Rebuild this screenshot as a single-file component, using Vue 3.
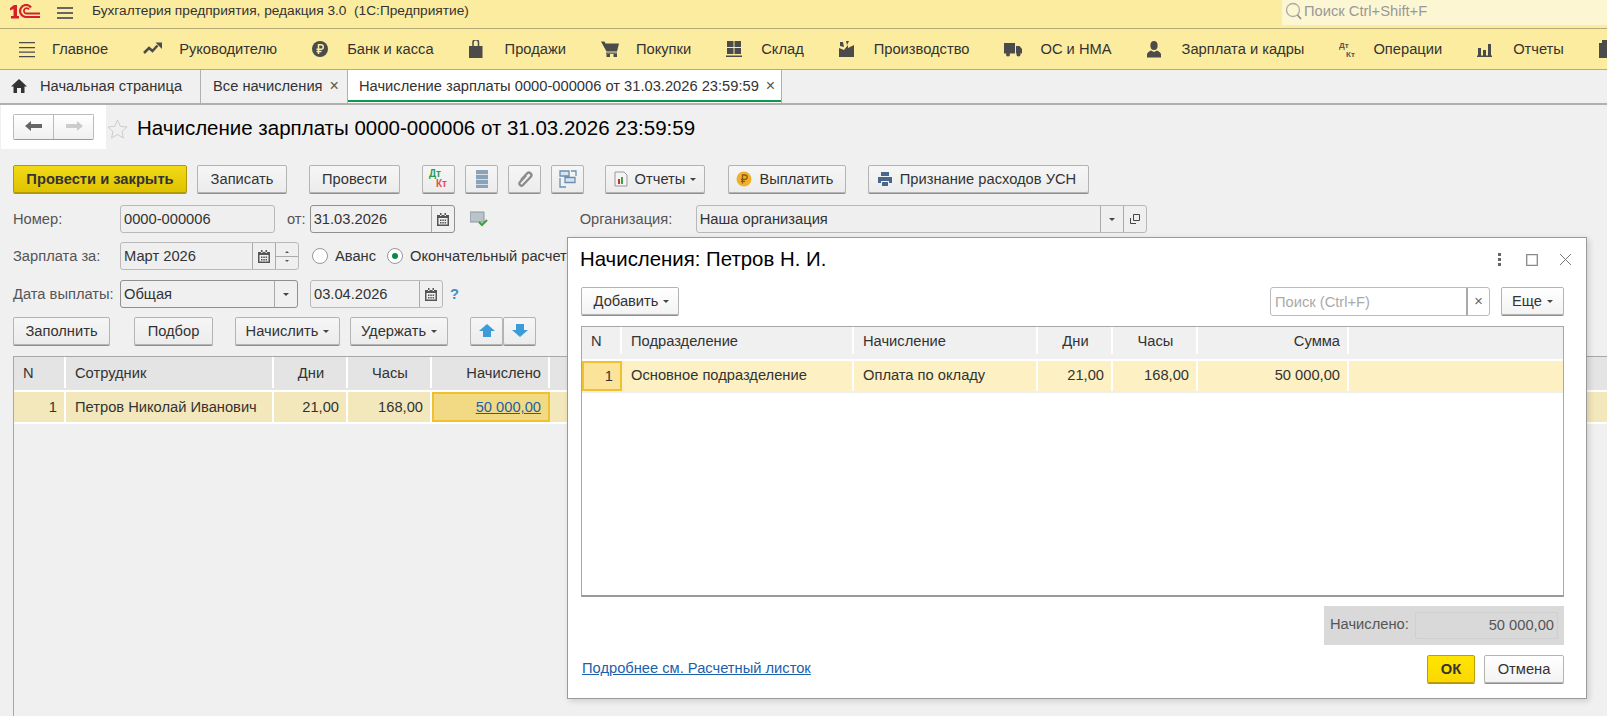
<script setup>
const sections = [
  { label: 'Главное', w: 33, icon: 'main' },
  { label: 'Руководителю', w: 36, icon: 'trend' },
  { label: 'Банк и касса', w: 35, icon: 'bank' },
  { label: 'Продажи', w: 36, icon: 'bag' },
  { label: 'Покупки', w: 35, icon: 'cart' },
  { label: 'Склад', w: 35, icon: 'stock' },
  { label: 'Производство', w: 35, icon: 'factory' },
  { label: 'ОС и НМА', w: 36, icon: 'truck' },
  { label: 'Зарплата и кадры', w: 35, icon: 'person' },
  { label: 'Операции', w: 34, icon: 'dtkt' },
  { label: 'Отчеты', w: 36, icon: 'bars' },
  { label: '', w: 20, icon: 'case' },
]

const mainColumns = [
  { title: 'N', value: '1', width: 52, cls: 'num' },
  { title: 'Сотрудник', value: 'Петров Николай Иванович', width: 208, cls: 'left' },
  { title: 'Дни', value: '21,00', width: 74, cls: 'right center-head' },
  { title: 'Часы', value: '168,00', width: 84, cls: 'right center-head' },
  { title: 'Начислено', value: '50 000,00', width: 118, cls: 'right current' },
  { title: '', value: '', width: 0, cls: 'fill' },
]

const dialogColumns = [
  { title: 'N', value: '1', width: 40, cls: 'num current' },
  { title: 'Подразделение', value: 'Основное подразделение', width: 232, cls: 'left' },
  { title: 'Начисление', value: 'Оплата по окладу', width: 184, cls: 'left' },
  { title: 'Дни', value: '21,00', width: 75, cls: 'right center-head' },
  { title: 'Часы', value: '168,00', width: 85, cls: 'right center-head' },
  { title: 'Сумма', value: '50 000,00', width: 151, cls: 'right' },
  { title: '', value: '', width: 0, cls: 'fill' },
]
</script>

<template>
  <div class="page">
    <header class="topbar">
      <svg class="logo" width="30" height="15" viewBox="0 0 30 15">
        <path d="M0 4l4-3h3v11h2v2.500H1V12h2.500V5L0 6.500z" fill="#d4202a" />
        <path d="M21 3.500A6 6 0 1 0 16 13H30" fill="none" stroke="#d4202a" stroke-width="2.200" />
        <path d="M19 5.500A2.700 2.700 0 1 0 16.500 9.500H30" fill="none" stroke="#d4202a" stroke-width="1.800" />
      </svg>
      <span class="burger"><i></i><i></i><i></i></span>
      <span class="app-title">Бухгалтерия предприятия, редакция 3.0&nbsp; (1С:Предприятие)</span>
      <div class="global-search">
        <svg width="18" height="20" viewBox="0 0 18 20">
          <circle cx="8" cy="9" r="6.500" fill="none" stroke="#aaa" stroke-width="1.300" />
          <path d="M12.500 14l3.500 4" stroke="#888" stroke-width="1.500" />
        </svg>
        <span>Поиск Ctrl+Shift+F</span>
      </div>
    </header>

    <nav class="sections">
      <div v-for="s in sections" :key="s.icon" class="section">
        <span class="section-icon" :style="{ width: s.w + 'px' }">
          <svg width="20" height="20" viewBox="0 0 20 20" fill="#4b4b4b">
            <template v-if="s.icon === 'main'">
              <path d="M0 2h16v1.200H0zM0 7h16v1.200H0zM0 11.600h16v1.200H0zM0 16h16v1.200H0z" />
            </template>
            <template v-else-if="s.icon === 'trend'">
              <path d="M1 13l5-5 3.500 3 5-5.500" fill="none" stroke="#4b4b4b" stroke-width="2.500" />
              <path d="M12.500 2.500h6.500V9z" />
            </template>
            <template v-else-if="s.icon === 'bank'">
              <circle cx="8" cy="9" r="8" />
              <path d="M6.500 14V4.700h2.500a2.300 2.300 0 0 1 0 4.600H4.500M4.500 11.600h5" fill="none" stroke="#fcec9f" stroke-width="1.500" />
            </template>
            <template v-else-if="s.icon === 'bag'">
              <path d="M0 6h13.500v12H0z" />
              <path d="M4 7V2.500a2.700 2.700 0 0 1 5.500 0V7" fill="none" stroke="#4b4b4b" stroke-width="1.500" />
            </template>
            <template v-else-if="s.icon === 'cart'">
              <path d="M0 1.500h3.500l1 2H18l-2 8H5.500zM5 12.500h11v1.300H5z" />
              <path d="M5.500 14h3.500v3H5.500zM12.500 14h3.500v3h-3.500z" />
            </template>
            <template v-else-if="s.icon === 'stock'">
              <path d="M1 1h6.500v6H1zM8.500 1H15v6H8.500zM1 8h6.500v6H1zM8.500 8H15v6H8.500zM0 15.500h16V17H0z" />
            </template>
            <template v-else-if="s.icon === 'factory'">
              <path d="M0 17V8l5 2 4-5v3l6-3v12zM1 2h3l1 5-4-1zM7 1h3L8 5z" />
            </template>
            <template v-else-if="s.icon === 'truck'">
              <path d="M0 3h11v10.500H0zM12 6h3.500l2.500 3v4.500h-6z" />
              <circle cx="4" cy="14.500" r="2" />
              <circle cx="14.500" cy="14.500" r="2" />
            </template>
            <template v-else-if="s.icon === 'person'">
              <ellipse cx="7" cy="5.500" rx="3.600" ry="4.500" />
              <path d="M0 17.500v-3c0-2 2-3 4-4l3 1.500 3-1.500c2 1 4 2 4 4v3z" />
            </template>
            <template v-else-if="s.icon === 'dtkt'">
              <text x="0" y="8" class="micro">Дт</text>
              <text x="7" y="17" class="micro">Кт</text>
            </template>
            <template v-else-if="s.icon === 'bars'">
              <path d="M1 8h3v8H1zM6 10h3v6H6zM11 4h3v12h-3zM0 15.500h15V17H0z" />
            </template>
            <template v-else>
              <path d="M3 0h8v3h3v15H0V3h3z" />
            </template>
          </svg>
        </span>
        <span v-if="s.label">{{ s.label }}</span>
      </div>
    </nav>

    <div class="tabs">
      <div class="tab home">
        <svg width="16" height="14" viewBox="0 0 16 14" fill="#333"><path d="M8 0l8 7.500h-2.500V14H10V9H6v5H2.500V7.500H0z" /></svg>
        <span>Начальная страница</span>
      </div>
      <div class="tab list"><span>Все начисления</span><b>×</b></div>
      <div class="tab active"><span>Начисление зарплаты 0000-000006 от 31.03.2026 23:59:59</span><b>×</b></div>
    </div>

    <main class="doc">
      <div class="doc-title">
        <div class="history">
          <div class="history-btns">
            <button class="hist">
              <svg width="18" height="12" viewBox="0 0 18 12" fill="#666"><path d="M0 6l6-5v3h11v4H6v3z" /></svg>
            </button>
            <button class="hist">
              <svg width="18" height="12" viewBox="0 0 18 12" fill="#ccc"><path d="M18 6l-6-5v3H1v4h11v3z" /></svg>
            </button>
          </div>
        </div>
        <svg class="star" width="21" height="20" viewBox="0 0 21 20"><path d="M10.500 1l2.900 6.300 6.600.7-5 4.500 1.400 6.500-5.900-3.400L4.600 19 6 12.500 1 8l6.600-.7z" fill="none" stroke="#ccc" /></svg>
        <h1>Начисление зарплаты 0000-000006 от 31.03.2026 23:59:59</h1>
      </div>

      <div class="toolbar main-actions">
        <button class="btn primary w-174">Провести и закрыть</button>
        <button class="btn w-90 ml-10">Записать</button>
        <button class="btn w-91 ml-22">Провести</button>
        <button class="btn icon-btn ml-22">
          <svg width="24" height="22" viewBox="0 0 24 22">
            <text x="2" y="9" class="dt">Дт</text>
            <text x="9" y="19" class="kt">Кт</text>
          </svg>
        </button>
        <button class="btn icon-btn ml-10">
          <svg width="14" height="20" viewBox="0 0 14 20" fill="#8aa3b8">
            <path d="M1 1h12v4.300H1zM1 6h12v4.300H1zM1 11h12v4.300H1zM1 16h12v3H1z" />
          </svg>
        </button>
        <button class="btn icon-btn ml-10">
          <svg width="18" height="18" viewBox="0 0 18 18">
            <path d="M5 10l6-6.500a2.500 2.500 0 0 1 3.600 3.500L7 15a2 2 0 0 1-3-3l6-6.500" fill="none" stroke="#8c8c8c" stroke-width="2.400" />
          </svg>
        </button>
        <button class="btn icon-btn ml-10">
          <svg width="18" height="18" viewBox="0 0 18 18" fill="#d6e4f0" stroke="#6d8db0" stroke-width="1.300">
            <path d="M1 1h9v5H1zM6 7.500h10v5H6z" />
            <path d="M1 8v9h6M12 1h5v5" fill="none" />
          </svg>
        </button>
        <button class="btn ml-21 w-100">
          <svg class="lead" width="14" height="16" viewBox="0 0 14 16">
            <path d="M1 1h9l3 3v11H1z" fill="#f4f4f4" stroke="#999" />
            <path d="M4 8h2v5H4z" fill="#c0392b" />
            <path d="M7 6h2v7H7z" fill="#4a9a4a" />
          </svg>
          Отчеты <i class="caret"></i>
        </button>
        <button class="btn ml-23 w-118 nudge">
          <svg class="lead" width="16" height="16" viewBox="0 0 16 16">
            <circle cx="8" cy="8" r="7.500" fill="#efb02e" />
            <path d="M6.500 12.500V4h2.500a2 2 0 0 1 0 4.300H5M5 10.300h4" fill="none" stroke="#8a5a10" stroke-width="1.300" />
          </svg>
          Выплатить
        </button>
        <button class="btn ml-22 w-221 nudge">
          <svg class="lead" width="16" height="16" viewBox="0 0 16 16" fill="#47688c">
            <path d="M4 1h8v4H4zM1 6h14v6h-3v-2H4v2H1zM5 11h6v4H5z" />
          </svg>
          Признание расходов УСН
        </button>
      </div>

      <div class="field-row row-number">
        <label class="field-label">Номер:</label>
        <div class="input readonly w-155"><span>0000-000006</span></div>
        <label class="field-label ml-12">от:</label>
        <div class="input strong w-145 ml-4">
          <span>31.03.2026</span>
          <span class="addon"><svg width="12" height="13" viewBox="0 0 12 13" fill="#555"><path d="M0 2h12v11H0zM1.500 5v6.500h9V5zM3 0h1.500v3H3zM7.500 0H9v3H7.500zM3 6.500h1.500V8H3zM5.300 6.500h1.500V8H5.300zM7.600 6.500h1.500V8H7.600zM3 9h1.500v1.500H3zM5.300 9h1.500v1.500H5.300zM7.600 9h1.500v1.500H7.600z" fill-rule="evenodd" /></svg></span>
        </div>
        <svg class="ml-15" width="18" height="16" viewBox="0 0 18 16">
          <path d="M0 1h14v10H0z" fill="#b9c3c9" stroke="#8b979e" />
          <path d="M9 11l3 3 5-5" fill="none" stroke="#3ca03c" stroke-width="2" />
        </svg>
        <label class="field-label org-label">Организация:</label>
        <div class="input readonly org">
          <span>Наша организация</span>
          <span class="addon wide"><i class="caret"></i></span>
          <span class="addon wide"><svg width="10" height="10" viewBox="0 0 10 10" fill="none" stroke="#444"><path d="M3.500.5h6v6h-6zM.5 4v5.500H6" /></svg></span>
        </div>
      </div>

      <div class="field-row row-period">
        <label class="field-label">Зарплата за:</label>
        <div class="input readonly w-179">
          <span>Март 2026</span>
          <span class="addon"><svg width="12" height="13" viewBox="0 0 12 13" fill="#555"><path d="M0 2h12v11H0zM1.500 5v6.500h9V5zM3 0h1.500v3H3zM7.500 0H9v3H7.500zM3 6.500h1.500V8H3zM5.300 6.500h1.500V8H5.300zM7.600 6.500h1.500V8H7.600zM3 9h1.500v1.500H3zM5.300 9h1.500v1.500H5.300zM7.600 9h1.500v1.500H7.600z" fill-rule="evenodd" /></svg></span>
          <span class="addon spin"><i class="mini up"></i><i class="mini"></i></span>
        </div>
        <span class="radio ml-13"></span><span class="radio-label">Аванс</span>
        <span class="radio on ml-11"></span><span class="radio-label">Окончательный расчет</span>
      </div>

      <div class="field-row row-pay">
        <label class="field-label">Дата выплаты:</label>
        <div class="input strong w-178">
          <span>Общая</span>
          <span class="addon"><i class="caret"></i></span>
        </div>
        <div class="input w-133 ml-12">
          <span>03.04.2026</span>
          <span class="addon"><svg width="12" height="13" viewBox="0 0 12 13" fill="#555"><path d="M0 2h12v11H0zM1.500 5v6.500h9V5zM3 0h1.500v3H3zM7.500 0H9v3H7.500zM3 6.500h1.500V8H3zM5.300 6.500h1.500V8H5.300zM7.600 6.500h1.500V8H7.600zM3 9h1.500v1.500H3zM5.300 9h1.500v1.500H5.300zM7.600 9h1.500v1.500H7.600z" fill-rule="evenodd" /></svg></span>
        </div>
        <span class="hint">?</span>
      </div>

      <div class="toolbar table-actions">
        <button class="btn w-97">Заполнить</button>
        <button class="btn w-79 ml-24">Подбор</button>
        <button class="btn w-105 ml-22">Начислить <i class="caret"></i></button>
        <button class="btn w-98 ml-10">Удержать <i class="caret"></i></button>
        <div class="btn-group ml-22">
          <button class="btn icon-btn">
            <svg width="16" height="14" viewBox="0 0 16 14" fill="#3d9bd8"><path d="M8 0l8 7h-4v6H4V7H0z" /></svg>
          </button>
          <button class="btn icon-btn">
            <svg width="16" height="14" viewBox="0 0 16 14" fill="#3d9bd8"><path d="M4 0h8v6h4l-8 7-8-7h4z" /></svg>
          </button>
        </div>
      </div>

      <div class="grid main-grid">
        <div class="grid-head">
          <div v-for="c in mainColumns" :key="c.title" class="cell" :class="c.cls" :style="c.width ? { width: c.width + 'px' } : null">{{ c.title }}</div>
        </div>
        <div class="grid-row">
          <div v-for="c in mainColumns" :key="c.title" class="cell" :class="c.cls" :style="c.width ? { width: c.width + 'px' } : null">
            <a v-if="c.title === 'Начислено'" class="link">{{ c.value }}</a>
            <template v-else>{{ c.value }}</template>
          </div>
        </div>
      </div>
    </main>

    <section class="dialog">
      <div class="dialog-head">
        <h2>Начисления: Петров Н. И.</h2>
        <div class="win-controls">
          <svg class="dots" width="3" height="13" viewBox="0 0 3 13" fill="#666"><path d="M0 0h3v3H0zM0 5h3v3H0zM0 10h3v3H0z" /></svg>
          <svg width="12" height="12" viewBox="0 0 12 12" fill="none" stroke="#888" stroke-width="1.300"><path d="M.7.7h10.600v10.600H.7z" /></svg>
          <svg width="11" height="11" viewBox="0 0 11 11" fill="none" stroke="#777"><path d="M0 0l11 11M11 0L0 11" /></svg>
        </div>
      </div>

      <div class="dialog-tools">
        <button class="btn flat w-98 add">Добавить <i class="caret"></i></button>
        <div class="search-box">
          <span>Поиск (Ctrl+F)</span>
          <b>×</b>
        </div>
        <button class="btn flat w-63">Еще <i class="caret"></i></button>
      </div>

      <div class="grid dialog-grid">
        <div class="grid-head">
          <div v-for="c in dialogColumns" :key="c.title" class="cell" :class="c.cls" :style="c.width ? { width: c.width + 'px' } : null">{{ c.title }}</div>
        </div>
        <div class="grid-row">
          <div v-for="c in dialogColumns" :key="c.title" class="cell" :class="c.cls" :style="c.width ? { width: c.width + 'px' } : null">{{ c.value }}</div>
        </div>
      </div>

      <div class="total-wrap">
        <div class="total">
          <span>Начислено:</span>
          <div class="total-value">50 000,00</div>
        </div>
      </div>

      <div class="dialog-foot">
        <a class="details">Подробнее см. Расчетный листок</a>
        <button class="btn ok">ОК</button>
        <button class="btn flat cancel">Отмена</button>
      </div>
    </section>
  </div>
</template>

<style>
html,
body {
  margin: 0;
  overflow: hidden;
  background: #f0f0f0;
}
</style>

<style scoped>
.page {
  position: relative;
  width: 1607px;
  height: 716px;
  overflow: hidden;
  background: #f0f0f0;
  color: #333;
  font: 14.7px "Liberation Sans", Arial, sans-serif;
}

.topbar {
  display: flex;
  align-items: flex-start;
  height: 28px;
  border-bottom: 1px solid #b5ab74;
  background: #fcec9f;
}
.logo {
  flex: none;
  margin: 4px 0 0 10px;
}
.burger {
  display: flex;
  flex-direction: column;
  gap: 3.500px;
  width: 16px;
  margin: 7px 0 0 17px;
}
.burger i {
  height: 1.500px;
  background: #666;
}
.app-title {
  margin: 3px 0 0 19px;
  font-size: 13.700px;
  line-height: 16px;
}
.global-search {
  display: flex;
  align-items: center;
  gap: 1px;
  width: 325px;
  height: 25px;
  margin-left: auto;
  padding: 0 0 3px 3px;
  background: #fdf6d2;
  color: #999;
  box-sizing: border-box;
}

.sections {
  display: flex;
  align-items: center;
  gap: 35px;
  height: 40px;
  padding-left: 19px;
  border-bottom: 1px solid #b5ab74;
  background: #fcec9f;
  white-space: nowrap;
}
.section {
  display: flex;
  align-items: center;
  flex: none;
}
.section-icon {
  display: block;
  height: 20px;
  margin-top: 1px;
}
.micro {
  font: bold 8px "Liberation Sans", sans-serif;
  fill: #555;
}

.tabs {
  display: flex;
  height: 33px;
  border-bottom: 2px solid #b0b0b0;
}
.tab {
  display: flex;
  align-items: center;
  height: 33px;
  padding-bottom: 2px;
  box-sizing: border-box;
  border-right: 1px solid #b0b0b0;
  white-space: nowrap;
}
.tab.home {
  width: 201px;
  padding-left: 11px;
  gap: 13px;
}
.tab.list {
  width: 147px;
  padding-left: 12px;
}
.tab.active {
  width: 434px;
  padding-left: 11px;
  background: #fff;
  box-shadow: inset 0 -1px 0 #fff, inset 0 -3px 0 #0a9a4b;
}
.tab b {
  margin-left: 7px;
  font-weight: 400;
  font-size: 16px;
  color: #555;
}

.doc {
  padding-left: 13px;
}
.doc-title {
  display: flex;
  align-items: center;
  height: 44px;
  margin-left: -12px;
}
.history {
  display: flex;
  flex: none;
  align-items: center;
  box-sizing: border-box;
  width: 105px;
  height: 44px;
  padding-left: 12px;
  background: #fff;
}
.history-btns {
  display: flex;
  width: 81px;
  height: 26px;
  border: 1px solid #bbb;
  border-bottom-color: #999;
  border-radius: 2px;
  box-sizing: border-box;
}
.hist {
  flex: 1;
  padding: 0;
  border: 0;
  background: linear-gradient(#fff, #f0f0f0);
}
.hist + .hist {
  border-left: 1px solid #bbb;
}
.star {
  margin: 0 0 0 1px;
  flex: none;
  transform: translateY(2px);
}
h1 {
  margin: 2px 0 0 9px;
  font-size: 20.500px;
  font-weight: 400;
  color: #000;
  white-space: nowrap;
}

.toolbar {
  display: flex;
  height: 29px;
}
.main-actions {
  margin-top: 16px;
}
.table-actions {
  margin-top: 9px;
}

.btn {
  display: inline-flex;
  align-items: center;
  justify-content: center;
  flex: none;
  height: 28px;
  padding: 0;
  border: 1px solid #b4b4b4;
  border-radius: 2px;
  box-shadow: 0 1px 0 #8f8f8f;
  background: linear-gradient(#f6f6f6, #ececec);
  color: #333;
  font: inherit;
}
.btn.primary {
  border-color: #b39a00;
  background: linear-gradient(#f2da17, #dfc200);
  font-weight: 700;
}
.btn.flat {
  background: linear-gradient(#fff, #f3f3f3);
}
.btn.nudge {
  padding-right: 4px;
}
.btn.add {
  padding-left: 3px;
}
.icon-btn {
  width: 33px;
}
.btn-group {
  display: flex;
}
.lead {
  margin-right: 7px;
}
.caret {
  display: inline-block;
  width: 0;
  height: 0;
  margin-left: 5px;
  border: 3px solid transparent;
  border-top: 3px solid #444;
  border-bottom: 0;
}

.w-63 { width: 63px; }
.w-79 { width: 79px; }
.w-90 { width: 90px; }
.w-91 { width: 91px; }
.w-97 { width: 97px; }
.w-98 { width: 98px; }
.w-100 { width: 100px; }
.w-105 { width: 105px; }
.w-118 { width: 118px; }
.w-133 { width: 133px; }
.w-145 { width: 145px; }
.w-155 { width: 155px; }
.w-174 { width: 174px; }
.w-178 { width: 178px; }
.w-179 { width: 179px; }
.w-221 { width: 221px; }
.ml-4 { margin-left: 4px; }
.ml-10 { margin-left: 10px; }
.ml-11 { margin-left: 11px; }
.ml-12 { margin-left: 12px; }
.ml-13 { margin-left: 13px; }
.ml-15 { margin-left: 15px; }
.ml-21 { margin-left: 21px; }
.ml-22 { margin-left: 22px; }
.ml-23 { margin-left: 23px; }
.ml-24 { margin-left: 24px; }

.dt {
  font: bold 10px "Liberation Sans", sans-serif;
  fill: #2d9a4f;
}
.kt {
  font: bold 10px "Liberation Sans", sans-serif;
  fill: #e05050;
}

.field-row {
  display: flex;
  align-items: center;
  height: 28px;
}
.row-number {
  margin-top: 11px;
}
.row-period {
  margin-top: 9px;
}
.row-pay {
  margin-top: 10px;
}
.field-label {
  flex: none;
  color: #555;
}
.field-row > .field-label:first-child {
  width: 107px;
}
.org-label {
  margin-left: 92px;
  width: 116px;
}
.input {
  display: flex;
  align-items: center;
  flex: none;
  box-sizing: border-box;
  height: 28px;
  border: 1px solid #b9b9b9;
  border-radius: 3px;
}
.input > span:first-child {
  flex: 1;
  padding-left: 3px;
}
.input.strong {
  border-color: #909090;
}
.input.readonly {
  background: #efefef;
}
.org {
  width: 451px;
}
.addon {
  display: flex;
  align-items: center;
  justify-content: center;
  flex: none;
  width: 22px;
  height: 100%;
  border-left: 1px solid #aaa;
}
.addon .caret {
  margin: 0;
}
.addon.spin {
  flex-direction: column;
  gap: 7px;
  background: linear-gradient(#aaa, #aaa) center / 100% 1px no-repeat;
}
.mini {
  width: 0;
  height: 0;
  border: 2px solid transparent;
  border-top: 2px solid #555;
  border-bottom: 0;
}
.mini.up {
  border-top: 0;
  border-bottom: 2px solid #555;
}
.radio {
  flex: none;
  position: relative;
  box-sizing: border-box;
  width: 16px;
  height: 16px;
  border: 1px solid #999;
  border-radius: 50%;
  background: #fff;
}
.radio.on::after {
  content: "";
  position: absolute;
  inset: 4px;
  border-radius: 50%;
  background: #0a8a44;
}
.radio-label {
  margin-left: 7px;
  white-space: nowrap;
}
.hint {
  margin-left: 7px;
  color: #3d8fc4;
  font-weight: 700;
}

.grid {
  box-sizing: border-box;
  border: solid #a8a8a8;
}
.main-grid {
  height: 360px;
  margin-top: 10px;
  border-width: 1px 0 0 1px;
}
.grid-head {
  display: flex;
  box-sizing: border-box;
  height: 35px;
  padding-bottom: 2px;
  background: #e4e4e4;
  border-bottom: 2px solid #fff;
}
.grid-row {
  display: flex;
  height: 30px;
  background: #f3e8bc;
  border-bottom: 2px solid #fff;
}
.cell {
  display: flex;
  align-items: center;
  flex: none;
  box-sizing: border-box;
  padding: 0 7px 0 9px;
  border-right: 2px solid #fff;
  white-space: nowrap;
}
.cell.right,
.cell.num {
  justify-content: flex-end;
}
.grid-head .cell.num {
  justify-content: flex-start;
}
.grid-head .cell.center-head {
  justify-content: center;
}
.cell.fill {
  flex: 1;
  border-right: 0;
}
.cell.current {
  border: 2px solid #efc030;
  background: #f2da85;
}
.grid-head .cell.current {
  border: 0;
  border-right: 2px solid #fff;
  background: none;
}
.link {
  color: #1b5fad;
  text-decoration: underline;
}

.dialog {
  position: absolute;
  left: 567px;
  top: 237px;
  display: flex;
  flex-direction: column;
  box-sizing: border-box;
  width: 1020px;
  height: 462px;
  padding: 0 22px 0 13px;
  border: 1px solid #9a9a9a;
  background: #fff;
  box-shadow: 2px 2px 6px rgba(0, 0, 0, 0.15);
}
.dialog-head {
  display: flex;
  align-items: center;
  justify-content: space-between;
  height: 43px;
}
h2 {
  margin: 0 0 0 -1px;
  font-size: 20.400px;
  font-weight: 400;
  color: #000;
}
.win-controls {
  display: flex;
  align-items: center;
  gap: 22px;
  margin-right: -7px;
}
.dots {
  margin-right: 3px;
}
.dialog-tools {
  display: flex;
  align-items: flex-start;
  height: 30px;
  margin-top: 6px;
}
.search-box {
  display: flex;
  align-items: center;
  box-sizing: border-box;
  width: 220px;
  height: 29px;
  margin: 0 11px 0 auto;
  padding-left: 4px;
  border: 1px solid #bbb;
  border-radius: 3px;
  color: #aaa;
}
.search-box span {
  flex: 1;
}
.search-box b {
  width: 21px;
  height: 100%;
  border-left: 2px solid #aaa;
  color: #666;
  font-weight: 400;
  line-height: 27px;
  text-align: center;
}
.dialog-grid {
  display: flex;
  flex-direction: column;
  height: 271px;
  margin-top: 9px;
  border-width: 1px;
  border-bottom: 2px solid #999;
}
.dialog-grid .grid-head {
  flex: none;
  height: 34px;
  padding-bottom: 5px;
  background: #f0f0f0;
}
.dialog-grid .grid-row {
  flex: none;
  background: #fdf0c2;
  border-bottom-color: #eee;
}
.dialog-grid .grid-row .cell:not(.current) {
  padding-bottom: 3px;
}
.dialog-grid .current {
  background: #fbe39a;
}
.total-wrap {
  display: flex;
  justify-content: flex-end;
  margin-top: 9px;
}
.total {
  display: flex;
  align-items: center;
  box-sizing: border-box;
  width: 240px;
  height: 39px;
  padding: 0 6px;
  background: #d9d9d9;
  color: #555;
}
.total span {
  margin-bottom: 3px;
}
.total-value {
  box-sizing: border-box;
  width: 143px;
  height: 27px;
  margin-left: auto;
  padding-right: 3px;
  border: 1px solid #cfcfcf;
  border-radius: 2px;
  line-height: 25px;
  text-align: right;
}
.dialog-foot {
  display: flex;
  align-items: center;
  gap: 9px;
  height: 28px;
  margin-top: 10px;
}
.details {
  margin: 0 auto 0 1px;
  color: #1b5fad;
  text-decoration: underline;
  transform: translateY(-1px);
}
.btn.ok {
  width: 48px;
  border-color: #bca000;
  background: linear-gradient(#ffe400, #fbd800);
  font-weight: 700;
}
.btn.cancel {
  width: 80px;
}
</style>
